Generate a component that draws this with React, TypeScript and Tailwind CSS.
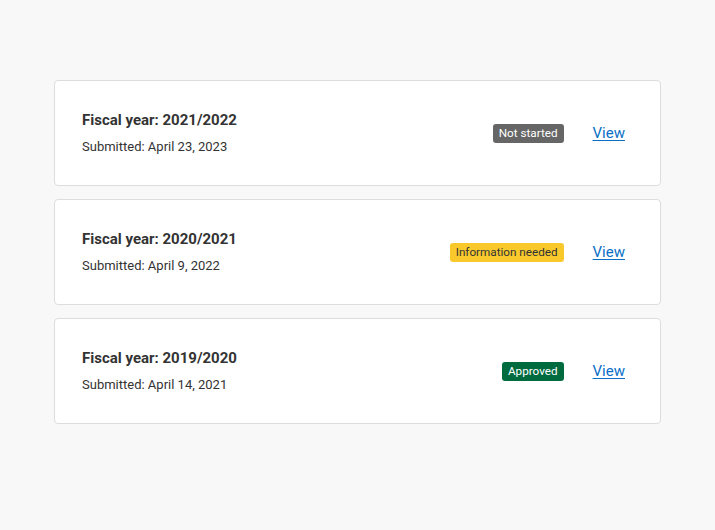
import React from "react";

const items = [
  { year: "2021/2022", date: "April 23, 2023", status: "Not started", cls: "bg-[#666666] text-white" },
  { year: "2020/2021", date: "April 9, 2022", status: "Information needed", cls: "bg-[#f9c92c] text-[#333333]" },
  { year: "2019/2020", date: "April 14, 2021", status: "Approved", cls: "bg-[#006b3f] text-white" },
];

export default function App() {
  return (
    <div
      className="min-h-[530px] w-full bg-[#f8f8f8] pt-[80px] px-[54px]"
      style={{ fontFamily: "Roboto, 'Liberation Sans', sans-serif" }}
    >
      <div className="flex w-[607px] flex-col gap-[13px]">
        {items.map((it) => (
          <div
            key={it.year}
            className="flex items-center justify-between rounded-[4px] border border-[#dddddd] bg-white py-[28px] pl-[27px] pr-[35px]"
          >
            <div className="flex flex-col">
              <div className="text-[15px] font-bold leading-[22px] text-[#333333]">
                Fiscal year: {it.year}
              </div>
              <div className="mt-[6px] text-[13px] leading-[20px] text-[#333333]">
                Submitted: {it.date}
              </div>
            </div>
            <div className="flex items-center gap-[29px]">
              <span className={`rounded-[3px] px-[6px] text-[11.7px] leading-[19px] ${it.cls}`}>
                {it.status}
              </span>
              <a href="#" className="text-[15px] leading-[20px] text-[#0b6fc7] underline underline-offset-2">
                View
              </a>
            </div>
          </div>
        ))}
      </div>
    </div>
  );
}
